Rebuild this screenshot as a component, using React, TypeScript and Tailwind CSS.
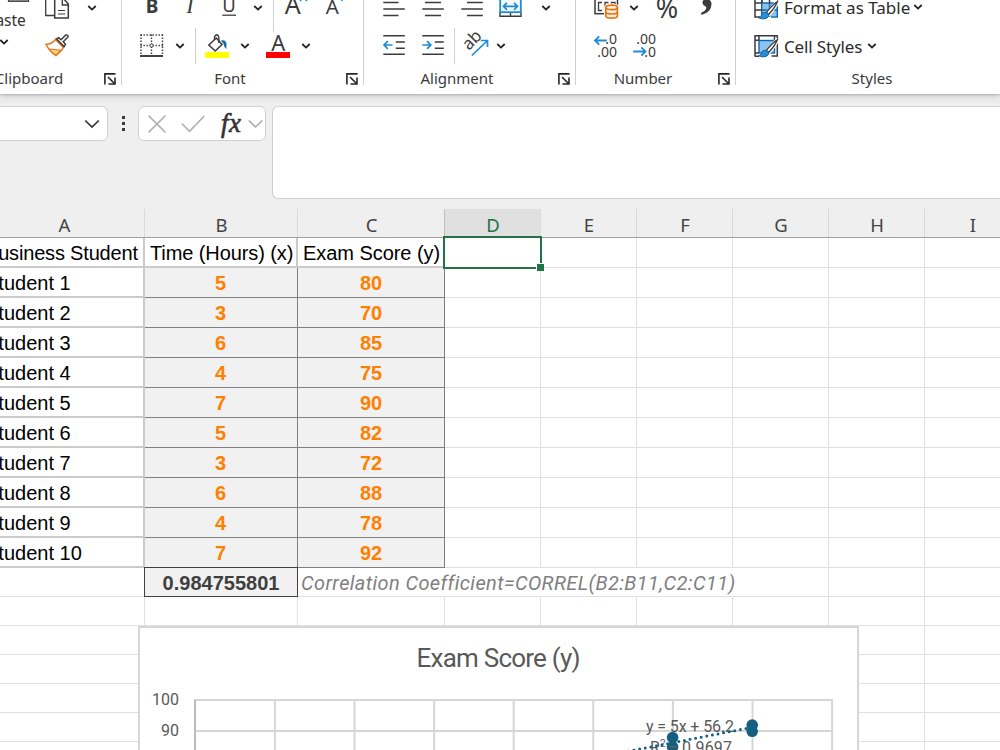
import type { ReactNode } from "react";
import clsx from "clsx";

// ---------- Data ----------
const students = [
  { name: "Student 1", hours: 5, score: 80 },
  { name: "Student 2", hours: 3, score: 70 },
  { name: "Student 3", hours: 6, score: 85 },
  { name: "Student 4", hours: 4, score: 75 },
  { name: "Student 5", hours: 7, score: 90 },
  { name: "Student 6", hours: 5, score: 82 },
  { name: "Student 7", hours: 3, score: 72 },
  { name: "Student 8", hours: 6, score: 88 },
  { name: "Student 9", hours: 4, score: 78 },
  { name: "Student 10", hours: 7, score: 92 },
];

const columns = [
  { id: "A", width: "w-[161px]" },
  { id: "B", width: "w-[153px]" },
  { id: "C", width: "w-[147px]" },
  { id: "D", width: "w-[96px]" },
  { id: "E", width: "w-[96px]" },
  { id: "F", width: "w-[96px]" },
  { id: "G", width: "w-[96px]" },
  { id: "H", width: "w-[96px]" },
  { id: "I", width: "w-[96px]" },
];

const INK = "#3b3b3b";
const BLUE = "#1e8bd4";

// ---------- Small pieces ----------
interface IconProps {
  className?: string;
  children: ReactNode;
}

const Icon = ({ className, children }: IconProps) => (
  <svg width="26" height="26" viewBox="0 0 26 26" fill="none" className={clsx("shrink-0 overflow-visible", className)}>
    {children}
  </svg>
);

const Chevron = ({ className }: { className?: string }) => (
  <svg width="10" height="8" viewBox="0 0 10 8" fill="none" className={clsx("shrink-0", className)}>
    <path d="M1.3 2 L5 5.6 L8.7 2" stroke="#222" strokeWidth="1.8" />
  </svg>
);

const Launcher = () => (
  <svg width="12" height="12" viewBox="0 0 12 12" fill="none" className="ml-2 shrink-0">
    <path d="M0.9 11.5 V0.9 H11.5 M4 4 L10 10 M11 4.5 V11 H4.5" stroke="#262626" strokeWidth="1.6" />
  </svg>
);

const Separator = ({ className }: { className?: string }) => <div className={clsx("h-9 w-px shrink-0 bg-[#d0d0d0]", className)} />;

const Row = ({ children, className }: { children: ReactNode; className?: string }) => (
  <div className={clsx("flex h-[38px] items-center", className)}>{children}</div>
);

interface GroupLabelProps {
  text: string;
  width: string;
  launcher?: boolean;
}

const GroupLabel = ({ text, width, launcher = true }: GroupLabelProps) => (
  <div className="flex h-7 items-center">
    <span className={clsx("-mt-[2px] shrink-0 text-center text-[15px] leading-5 text-[#3a3a3a]", width)}>{text}</span>
    {launcher && <Launcher />}
  </div>
);

const Divider = () => <div className="h-24 w-px shrink-0 bg-[#d0d0d0]" />;

// ---------- Brush used by both style icons ----------
const StyleBrush = () => (
  <>
    <path d="M23.5 6.5 L14 17 L11.5 19.5 L14.5 21.5 L18 18 L25 8 Z" fill="#fff" stroke="#fff" strokeWidth="2.5" />
    <path d="M24.3 6.8 Q20 9 13.2 17.4 L15.6 19.4 Q22 13 24.3 6.8 Z" fill="#fff" stroke={INK} strokeWidth="1.4" />
    <path d="M13 17.3 Q8.5 17 8.3 20.5 Q8 22.5 5.5 22.8 Q10 25 14 23 Q16.5 21.5 15.6 19.4 Z" fill="#2a8dd4" stroke="#1067b2" />
  </>
);

// ---------- Ribbon groups ----------
const ClipboardGroup = () => (
  <div className="w-[121px] shrink-0">
    <div className="flex">
      <div className="flex w-10 flex-col">
        <svg width="40" height="14" viewBox="0 0 40 14" className="shrink-0">
          <rect x="8.5" y="2" width="20" height="10.3" fill="#a5a5a5" stroke={INK} strokeWidth="1.2" />
        </svg>
        <span className="-ml-[14px] mt-[5px] text-[15.5px] leading-6 text-[#333]">Paste</span>
        <Chevron className="-ml-px mt-[6px]" />
      </div>
      <div>
        <Row>
          <Icon className="ml-1">
            <path d="M10 20.5 H1.7 V2 H10" stroke={INK} strokeWidth="1.3" fill="#fff" />
            <path d="M10.7 23 V3 H19 L24.3 9 V23 Z" fill="#fff" stroke={INK} strokeWidth="1.5" />
            <path d="M18.3 4 V10 H24" stroke={INK} strokeWidth="1.3" />
            <path d="M14 15.5 H21 M14 19 H21" stroke={INK} strokeWidth="1.2" />
          </Icon>
          <Chevron className="ml-[17px]" />
        </Row>
        <Row>
          <Icon className="ml-1">
            <path d="M2 11.5 Q8 11 11.5 6.5 L19.5 14.5 Q17 19 12 22.5 Q6 19 2 11.5 Z" fill="#fff" stroke="#e97410" strokeWidth="1.5" />
            <path d="M5 16 L16.8 17.2 L12 22.3 Q8 20 5 16 Z" fill="#fbd78a" stroke="#e97410" strokeWidth="1.2" />
            <path d="M12.5 6 L20 13.5 L21.5 11.3 L19.2 8.8 L24 4 Q24.4 1.6 21.8 2 L17 6.8 L14.7 4.6 Z" fill="#fff" stroke={INK} strokeWidth="1.5" />
          </Icon>
        </Row>
      </div>
    </div>
    <div className="-ml-[38px]">
      <GroupLabel text="Clipboard" width="w-[134px]" />
    </div>
  </div>
);

const FontGroup = () => (
  <div className="w-[241px] shrink-0">
    <Row className="pl-[17px]">
      <Icon>
        <text x="13" y="18" textAnchor="middle" fontSize="19" fontWeight="700" fill={INK}>B</text>
      </Icon>
      <Icon className="ml-3">
        <text x="13" y="18" textAnchor="middle" fontSize="22" fontStyle="italic" fontFamily="Liberation Serif, serif" fill={INK}>I</text>
      </Icon>
      <Icon className="ml-[13px]">
        <text x="13" y="17.3" textAnchor="middle" fontSize="18.5" fill={INK}>U</text>
        <path d="M6.3 20.2 H20" stroke={INK} strokeWidth="1.3" />
      </Icon>
      <Chevron className="ml-[11px]" />
      <Separator className="ml-[10px] mt-3" />
      <Icon className="ml-[9px]">
        <text x="9.8" y="19.3" textAnchor="middle" fontSize="25" fill={INK}>A</text>
        <path d="M17 6 L20.5 2.5 L24 6" stroke={BLUE} strokeWidth="1.5" />
      </Icon>
      <Icon className="ml-[14px]">
        <text x="9.2" y="19.3" textAnchor="middle" fontSize="20.5" fill={INK}>A</text>
        <path d="M15.5 2 L19 5.3 L22.5 2" stroke={BLUE} strokeWidth="1.5" />
      </Icon>
    </Row>
    <Row className="pl-[17px]">
      <Icon>
        <path d="M1.5 2 H24 M1.5 12.5 H24" stroke={INK} strokeWidth="1.4" strokeDasharray="1.4 1.6" />
        <path d="M2 1.5 V22 M12.5 1.5 V22 M23.5 1.5 V22" stroke={INK} strokeWidth="1.4" strokeDasharray="1.4 1.6" />
        <circle cx="12.5" cy="12.5" r="1.6" fill="#fff" stroke={INK} />
        <path d="M1 23 H24" stroke="#111" strokeWidth="1.6" />
      </Icon>
      <Chevron className="ml-[10px]" />
      <Separator className="ml-[10px]" />
      <Icon className="ml-2">
        <path d="M4.8 12 L12.3 5 L18 11.5 L11.2 18 Z" fill="#fff" stroke={INK} strokeWidth="1.5" />
        <path d="M10.5 7 Q10 1.8 13 1.8 Q15.5 2 14.8 10" stroke={INK} strokeWidth="1.4" />
        <path d="M16.8 7.5 Q21.5 6 22.5 10.5 L22.3 16 Q20 14.5 19.5 10.8 Z" fill="#0f6cb4" />
        <rect x="1" y="19" width="24" height="6" fill="#ffff00" />
      </Icon>
      <Chevron className="ml-[10px]" />
      <Icon className="ml-[15px]">
        <text x="13.2" y="17.6" textAnchor="middle" fontSize="22" fill={INK}>A</text>
        <rect x="1" y="19" width="24" height="6" fill="#ff0000" />
      </Icon>
      <Chevron className="ml-[10px]" />
    </Row>
    <GroupLabel text="Font" width="w-[216px]" />
  </div>
);

const AlignmentGroup = () => (
  <div className="w-[211px] shrink-0">
    <Row className="pl-[18px]">
      <Icon>
        <path d="M1.3 7.5 H16.5 M1.3 14 H22.8 M1.3 20.5 H16.5" stroke={INK} strokeWidth="1.4" />
      </Icon>
      <Icon className="ml-[13px]">
        <path d="M4 7.5 H20 M1.3 14 H22.8 M4 20.5 H20" stroke={INK} strokeWidth="1.4" />
      </Icon>
      <Icon className="ml-[13px]">
        <path d="M7 7.5 H22.8 M1.3 14 H22.8 M7 20.5 H22.8" stroke={INK} strokeWidth="1.4" />
      </Icon>
      <Icon className="ml-3">
        <path d="M2 17 V21.3 H23 V17 M12.5 17 V21.3" stroke={INK} strokeWidth="1.4" />
        <rect x="2.2" y="2" width="20.6" height="15.2" fill="#f3f9fd" stroke={BLUE} strokeWidth="1.8" />
        <path d="M5.5 11.3 H19.5 M9 7.8 L5.5 11.3 L9 14.8 M16 7.8 L19.5 11.3 L16 14.8" stroke={BLUE} strokeWidth="1.7" />
      </Icon>
      <Chevron className="ml-[17px]" />
    </Row>
    <Row className="pl-[18px]">
      <Icon>
        <path d="M1.3 2.8 H22.8 M13.8 9 H22.8 M13.8 15.2 H22.8 M1.3 21.2 H22.8" stroke={INK} strokeWidth="1.4" />
        <path d="M10.5 12 H2 M5.8 8.2 L2 12 L5.8 15.8" stroke={BLUE} strokeWidth="1.7" />
      </Icon>
      <Icon className="ml-[13px]">
        <path d="M1.3 2.8 H22.8 M13.8 9 H22.8 M13.8 15.2 H22.8 M1.3 21.2 H22.8" stroke={INK} strokeWidth="1.4" />
        <path d="M1.3 12 H9.8 M6 8.2 L9.8 12 L6 15.8" stroke={BLUE} strokeWidth="1.7" />
      </Icon>
      <Separator className="ml-[7px]" />
      <Icon className="ml-2">
        <text x="6" y="18" fontSize="17" fill={INK} transform="rotate(-46 6 18)">ab</text>
        <path d="M8.8 22.5 L24 8 M17.8 7.5 H24.5 V14" stroke={BLUE} strokeWidth="1.7" />
      </Icon>
      <Chevron className="ml-[7px]" />
    </Row>
    <GroupLabel text="Alignment" width="w-[186px]" />
  </div>
);

const NumberGroup = () => (
  <div className="w-[159px] shrink-0">
    <Row className="pl-[17px]">
      <Icon>
        <rect x="2" y="0" width="22.5" height="18.7" fill="#fff" stroke={INK} strokeWidth="1.5" />
        <path d="M9 7.5 H5.5 V15.5 H9 M15.5 7.5 H12 V15.5 H15.5 M18.5 10 V7.5 H22 V12" stroke={INK} strokeWidth="1.3" />
        <path d="M12.8 12.5 Q13 10.2 18.7 10.2 Q24.4 10.2 24.4 12.5 V21 Q24.4 23.2 18.7 23.2 Q13 23.2 12.8 21 Z" stroke="#fff" strokeWidth="3.5" />
        <path d="M12.8 12.5 Q13 10.2 18.7 10.2 Q24.4 10.2 24.4 12.5 V21 Q24.4 23.2 18.7 23.2 Q13 23.2 12.8 21 Z" fill="#fff3e4" stroke="#e97410" strokeWidth="1.7" />
        <path d="M12.8 12.5 Q13.5 14.7 18.7 14.7 Q24 14.7 24.4 12.5 M12.8 17 Q13.5 19 18.7 19 Q24 19 24.4 17" stroke="#e97410" strokeWidth="1.7" />
      </Icon>
      <Chevron className="ml-[10px]" />
      <Icon className="ml-[15px]">
        <text x="13" y="22.5" textAnchor="middle" fontSize="27" fill={INK}>%</text>
      </Icon>
      <Icon className="ml-[14px]">
        <text x="13" y="11.5" textAnchor="middle" fontSize="52" fontWeight="700" fontFamily="Liberation Serif, serif" fill={INK}>,</text>
      </Icon>
    </Row>
    <Row className="pl-[17px]">
      <Icon>
        <text x="24" y="11.4" textAnchor="end" fontSize="14" fill={INK}>.0</text>
        <text x="24" y="23.6" textAnchor="end" fontSize="14" fill={INK}>.00</text>
        <path d="M13.8 7.5 H2 M6.2 3.3 L2 7.5 L6.2 11.7" stroke={BLUE} strokeWidth="1.8" />
      </Icon>
      <Icon className="ml-[13px]">
        <text x="24" y="11.4" textAnchor="end" fontSize="14" fill={INK}>.00</text>
        <text x="24" y="23.6" textAnchor="end" fontSize="14" fill={INK}>.0</text>
        <path d="M1.2 18.5 H13.5 M9.3 14.3 L13.5 18.5 L9.3 22.7" stroke={BLUE} strokeWidth="1.8" />
      </Icon>
    </Row>
    <GroupLabel text="Number" width="w-[134px]" />
  </div>
);

const StylesGroup = () => (
  <div className="w-[272px] shrink-0">
    <Row className="pl-[17px]">
      <Icon>
        <rect x="9" y="8" width="15.5" height="13.5" fill="#8cc4ef" />
        <path d="M8.7 8 H24 M8.7 15 H24 M8.7 1 V22 M16.5 8 V22 M24.3 8 V22 H18" stroke="#1067b2" strokeWidth="1.4" />
        <path d="M2 0 V22 H7 M2 8 H9 M2 15 H9 M9 0 V8 M16.5 0 V8 M24 0 V8" stroke={INK} strokeWidth="1.5" />
        <StyleBrush />
      </Icon>
      <span className="ml-[5px] w-[129px] whitespace-nowrap text-[17px] leading-6 text-[#2b2b2b]">Format as Table</span>
      <Chevron className="-mt-[2px]" />
    </Row>
    <Row className="pl-[17px]">
      <Icon>
        <rect x="6" y="7.5" width="15.5" height="12.5" fill="#8cc4ef" stroke="#1067b2" strokeWidth="1.4" />
        <path d="M2 23.5 V2.8 H24.3 V23 H18.5 M6 2.8 V7 M21.5 2.8 V7 M2 7.2 H6 M2 20 H6 M2 23.3 H6" stroke={INK} strokeWidth="1.5" />
        <StyleBrush />
      </Icon>
      <span className="ml-[5px] mt-px w-[83px] whitespace-nowrap text-[17px] leading-6 tracking-[-0.15px] text-[#2b2b2b]">Cell Styles</span>
      <Chevron />
    </Row>
    <GroupLabel text="Styles" width="w-[272px]" launcher={false} />
  </div>
);

const Ribbon = () => (
  <div className="relative z-10 h-[94px] shrink-0 bg-white shadow-[0_1px_2px_#b4b4b4,0_3px_7px_#d0d0d0]">
    <div className="-mt-[11px] flex">
      <ClipboardGroup />
      <Divider />
      <FontGroup />
      <Divider />
      <AlignmentGroup />
      <Divider />
      <NumberGroup />
      <Divider />
      <StylesGroup />
    </div>
  </div>
);

// ---------- Formula bar ----------
const FormulaBar = () => (
  <div className="flex h-[115px] shrink-0 items-start pt-3">
    <div className="-ml-3 flex h-[35px] w-[120px] shrink-0 items-center justify-end rounded-md border border-[#d0d0d0] bg-white pt-px pr-[7px]">
      <svg width="16" height="10" viewBox="0 0 16 10" fill="none">
        <path d="M1.2 1.5 L8 8 L14.8 1.5" stroke="#333" strokeWidth="1.7" />
      </svg>
    </div>
    <div className="ml-[13px] flex h-[35px] w-1 shrink-0 flex-col items-center justify-center gap-[3px]">
      <i className="size-[3px] bg-[#3b3b3b]" />
      <i className="size-[3px] bg-[#3b3b3b]" />
      <i className="size-[3px] bg-[#3b3b3b]" />
    </div>
    <div className="ml-[13px] flex h-[35px] w-32 shrink-0 items-center rounded-md border border-[#d0d0d0] bg-white pl-[9px]">
      <svg width="18" height="18" viewBox="0 0 18 18" fill="none" className="shrink-0">
        <path d="M0.6 0.6 L17.4 17.4 M17.4 0.6 L0.6 17.4" stroke="#b0b0b0" strokeWidth="1.5" />
      </svg>
      <svg width="24" height="18" viewBox="0 0 24 18" fill="none" className="ml-[15px] shrink-0">
        <path d="M0.7 8.5 L8.5 16.3 L23.3 1" stroke="#b0b0b0" strokeWidth="1.6" />
      </svg>
      <span className="ml-[16px] w-[22px] -translate-y-px text-[27px] leading-[30px] tracking-[0.5px] text-[#333] italic [-webkit-text-stroke:0.6px_#333] [font-family:'Liberation_Serif',serif]">
        fx
      </span>
      <svg width="15" height="10" viewBox="0 0 15 10" fill="none" className="ml-[5px] shrink-0">
        <path d="M0.7 1.5 L7.5 8 L14.3 1.5" stroke="#a8a8a8" strokeWidth="1.6" />
      </svg>
    </div>
    <div className="ml-[6px] h-[93px] flex-1 rounded-l-md border border-r-0 border-[#d0d0d0] bg-white" />
  </div>
);

// ---------- Grid ----------
const ColumnHeaders = () => (
  <div className="flex h-[29px] border-b border-[#a0a0a0]">
    {columns.map(({ id, width }) => (
      <div
        key={id}
        className={clsx(
          "flex shrink-0 items-center justify-center border-r pt-[3px] pl-px text-[18.5px] leading-6",
          width,
          id === "D" ? "border-[#bdbdbd] bg-[#e0e0e0] text-[#217346]" : "text-[#444]",
          id === "C" ? "border-[#bdbdbd]" : "border-[#dadada]",
        )}
      >
        {id}
      </div>
    ))}
  </div>
);

const emptyCell = "w-24 shrink-0 border-r border-b border-[#e0e0e0]";
const thickCell = "shrink-0 border-r-2 border-b-2 border-[#cbcbcb] text-[20px] leading-7 whitespace-nowrap text-black [font-family:'Liberation_Sans',sans-serif]";
const valueCell =
  "flex shrink-0 items-center justify-center border-r border-b border-[#7f7f7f] bg-[#f1f1f1] text-[20px] leading-7 font-bold text-[#ff8000] [font-family:'Liberation_Sans',sans-serif]";

const EmptyCells = ({ from }: { from: string }) => (
  <>
    {columns
      .filter(({ id }) => id >= from)
      .map(({ id }) => (
        <div key={id} className={emptyCell} />
      ))}
  </>
);

const TitleRow = () => (
  <div className="flex h-[30px]">
    <div className={clsx(thickCell, "w-[161px] pt-px pl-px tracking-[-0.18px]")}>Business Student</div>
    <div className={clsx(thickCell, "w-[153px] pt-px pl-[5px] tracking-[-0.1px]")}>Time (Hours) (x)</div>
    <div className={clsx(thickCell, "w-[147px] pt-px pl-[5px] tracking-[-0.05px]")}>Exam Score (y)</div>
    <div className={clsx(emptyCell, "relative")}>
      <div className="absolute -top-[2px] -left-[2px] h-[33px] w-[99px] border-2 border-[#217346]" />
      <div className="absolute top-[25px] left-[91px] size-2 border border-r-0 border-b-0 border-white bg-[#217346]" />
    </div>
    <EmptyCells from="E" />
  </div>
);

const ResultRow = () => (
  <div className="flex h-[29px]">
    <div className="w-[160px] shrink-0 border-b border-[#e0e0e0]" />
    <div className="-mt-px flex h-[30px] w-[154px] shrink-0 items-center justify-center border border-[#3f3f3f] bg-[#f1f1f1] pt-px text-[20px] font-bold text-[#3f3f3f] [font-family:'Liberation_Sans',sans-serif]">
      0.984755801
    </div>
    <div className="w-[531px] shrink-0 border-r border-b border-[#e0e0e0] pt-px pl-[3px] text-[20px] leading-7 tracking-[0.37px] whitespace-nowrap text-[#7f7f7f] italic [font-family:Roboto,sans-serif]">
      Correlation Coefficient=CORREL(B2:B11,C2:C11)
    </div>
    <EmptyCells from="H" />
  </div>
);

const Sheet = () => (
  <div className="-ml-4 flex w-[1040px] flex-col">
    <ColumnHeaders />
    <div className="bg-white">
      <TitleRow />
      {students.map(({ name, hours, score }) => (
        <div key={name} className="flex h-[30px]">
          <div className={clsx(thickCell, "w-[161px] pt-px pl-px")}>{name}</div>
          <div className={clsx(valueCell, "w-[153px] pr-px")}>{hours}</div>
          <div className={clsx(valueCell, "w-[147px]")}>{score}</div>
          <EmptyCells from="D" />
        </div>
      ))}
      <ResultRow />
      {[13, 14, 15, 16, 17, 18].map((row) => (
        <div key={row} className="flex h-[29px]">
          {columns.map(({ id, width }) => (
            <div key={id} className={clsx("shrink-0 border-r border-b border-[#e0e0e0]", width)} />
          ))}
        </div>
      ))}
    </div>
  </div>
);

// ---------- Chart ----------
const toX = (hours: number) => 55.8 + hours * 79.6;
const toY = (score: number) => 74 + (100 - score) * 3.1;

const Chart = () => (
  <div className="absolute top-[626px] left-[138px] z-10 h-[300px] w-[721px] border-2 border-[#d6d6d6] bg-white">
    <svg width="717" height="296" viewBox="2 2 717 296" fill="none" fontFamily="Roboto, sans-serif">
      <text x="278.5" y="41" fontSize="26" fill="#595959" textLength="164">Exam Score (y)</text>
      <path d="M56 74 H694 M56 105 H694 M56 136 H694" stroke="#d6d6d6" strokeWidth="2" />
      {[1, 2, 3, 4, 5, 6, 7, 8].map((n) => (
        <path key={n} d={`M${toX(n) + 1.5} 73 V300`} stroke="#d6d6d6" strokeWidth="2" />
      ))}
      <path d="M57 74 V300" stroke="#bdbdbd" strokeWidth="2" />
      <text x="41" y="79" textAnchor="end" fontSize="16" fill="#595959">100</text>
      <text x="41" y="110" textAnchor="end" fontSize="16" fill="#595959">90</text>
      <text x="508" y="106" fontSize="16" fill="#595959" textLength="88">y = 5x + 56.2</text>
      <text x="512" y="127" fontSize="16" fill="#595959">R</text>
      <text x="522" y="121" fontSize="10" fill="#595959">2</text>
      <text x="531" y="127" fontSize="16" fill="#595959" textLength="63">= 0.9697</text>
      <path
        d={`M${toX(3)} ${toY(71.2)} L${toX(7) + 1} ${toY(91.2)}`}
        stroke="#156082"
        strokeWidth="3"
        strokeLinecap="round"
        strokeDasharray="0 5.7"
      />
      {students.map(({ name, hours, score }) => (
        <circle key={name} cx={toX(hours) + 1.2} cy={toY(score) + 0.3} r="5.8" fill="#156082" />
      ))}
      <path d="M531 120.7 H539" stroke="#7a5a50" strokeWidth="1.2" />
    </svg>
  </div>
);

// ---------- App ----------
const App = () => (
  <div className="relative flex h-[750px] w-[1000px] flex-col overflow-hidden bg-[#efefef] [font-family:'Noto_Sans',sans-serif]">
    <Ribbon />
    <FormulaBar />
    <Sheet />
    <Chart />
  </div>
);

export default App;
